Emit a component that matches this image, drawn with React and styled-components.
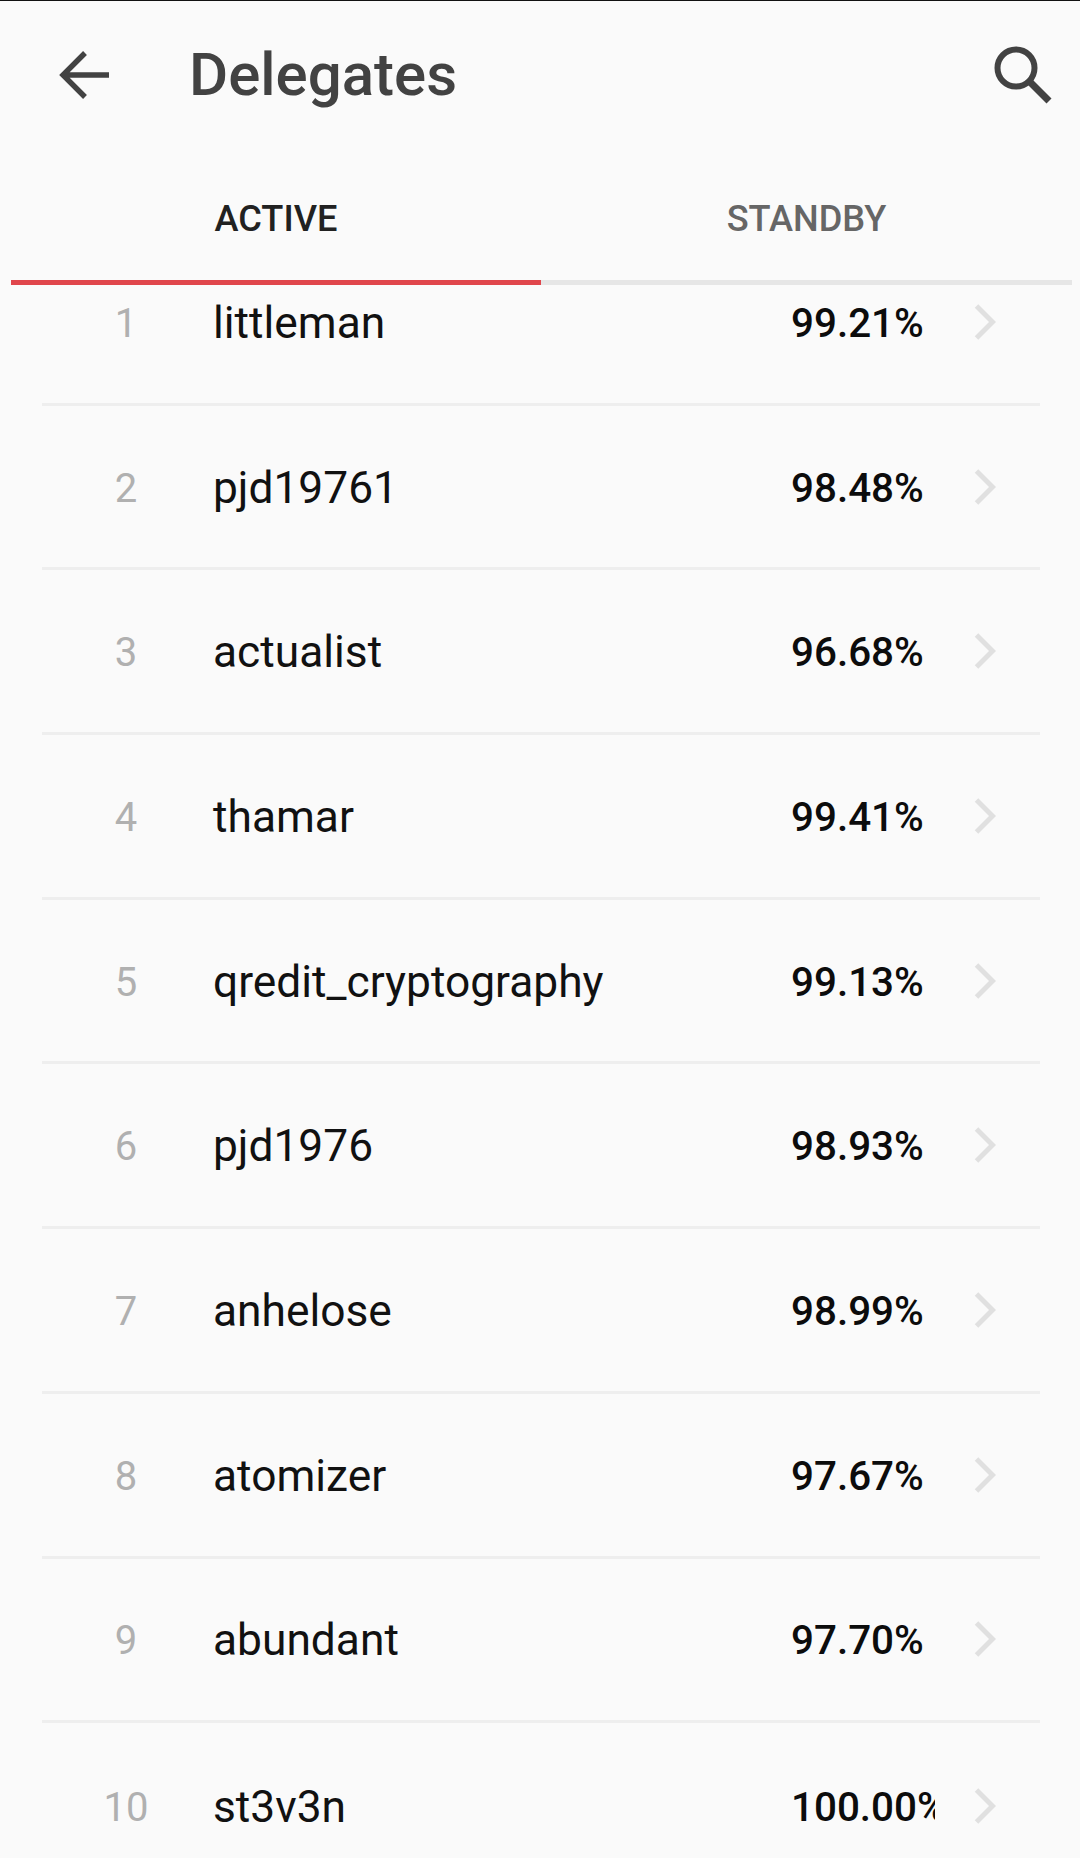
import React from "react";
import styled, { createGlobalStyle } from "styled-components";

const Global = createGlobalStyle`
  html, body { margin: 0; padding: 0; background: #fafafa; }
  body { font-family: Roboto, "Liberation Sans", sans-serif; }
`;
const Page = styled.div`
  width: 1080px; height: 1858px; overflow: hidden; background: #fafafa;
  border-top: 1px solid #111; box-sizing: border-box;
  display: flex; flex-direction: column;
`;
const Toolbar = styled.header`
  height: 147px; flex: none; display: flex; align-items: center;
  padding: 0 0 0 59px;
`;
const IconSlot = styled.svg`display: block; flex: none; color: #424242;`;
const Title = styled.h1`
  margin: 0 0 0 78px; flex: 1; font-size: 60px; font-weight: 500; color: #424242; line-height: 1;
`;
const SearchSlot = styled.div`margin-right: 27px; display: flex;`;
const Tabs = styled.nav`
  height: 137px; flex: none; display: grid; grid-template-columns: 530px 531px;
  margin: 0 8px 0 11px;
`;
const Tab = styled.div`
  display: flex; align-items: center; justify-content: center; box-sizing: border-box;
  padding-top: 9px;
  font-size: 36.2px; font-weight: 500;
  color: ${p => (p.$active ? "#212121" : "#666")};
  border-bottom: 5px solid ${p => (p.$active ? "#e0464c" : "#e6e6e6")};
`;
const Viewport = styled.div`flex: 1; overflow: hidden; min-height: 0;`;
const List = styled.ul`list-style: none; margin: -44px 0 0; padding: 0;`;
const Row = styled.li`
  height: 164.7px; box-sizing: border-box; margin: 0 40px 0 42px;
  display: flex; align-items: center;
  border-bottom: ${p => (p.$last ? "none" : "3px solid #eeeeee")};
`;
const Rank = styled.span`
  width: 86px; margin: 3px 44px 0 41px; flex: none; text-align: center;
  font-size: 40px; color: #b0b0b0;
`;
const Name = styled.span`flex: 1; margin-top: 2px; font-size: 44.3px; color: #111;`;
const Percent = styled.span`
  width: 144px; margin-top: 3px; flex: none; overflow: hidden; white-space: nowrap;
  font-size: 40.4px; font-weight: 500; color: #0c0c0c;
`;
const Chevron = styled.svg`display: block; flex: none; margin: 0 44px 0 39px; color: #e0e0e0;`;

const data = [
  ["littleman", "99.21%"], ["pjd19761", "98.48%"], ["actualist", "96.68%"], ["thamar", "99.41%"],
  ["qredit_cryptography", "99.13%"], ["pjd1976", "98.93%"], ["anhelose", "98.99%"], ["atomizer", "97.67%"],
  ["abundant", "97.70%"], ["st3v3n", "100.00%"],
];

export default function App() {
  return (
    <Page>
      <Global />
      <Toolbar>
        <IconSlot width="52" height="52" viewBox="0 0 52 52" fill="none" stroke="currentColor" strokeWidth="5.4">
          <path d="M50 26H6M26 4 4 26l22 22" />
        </IconSlot>
        <Title>Delegates</Title>
        <SearchSlot>
          <IconSlot width="60" height="60" viewBox="0 0 60 60" fill="none" stroke="currentColor" strokeWidth="6">
            <circle cx="23" cy="23" r="18.5" />
            <path d="M36 36 56 56" strokeWidth="7" />
          </IconSlot>
        </SearchSlot>
      </Toolbar>
      <Tabs>
        <Tab $active>ACTIVE</Tab>
        <Tab>STANDBY</Tab>
      </Tabs>
      <Viewport>
        <List>
          {data.map(([n, p], i) => (
            <Row key={n} $last={i === data.length - 1}>
              <Rank>{i + 1}</Rank>
              <Name>{n}</Name>
              <Percent>{p}</Percent>
              <Chevron width="22" height="36" viewBox="0 0 22 36" fill="none" stroke="currentColor" strokeWidth="5">
                <path d="M2.5 2 18.5 18 2.5 34" />
              </Chevron>
            </Row>
          ))}
        </List>
      </Viewport>
    </Page>
  );
}
